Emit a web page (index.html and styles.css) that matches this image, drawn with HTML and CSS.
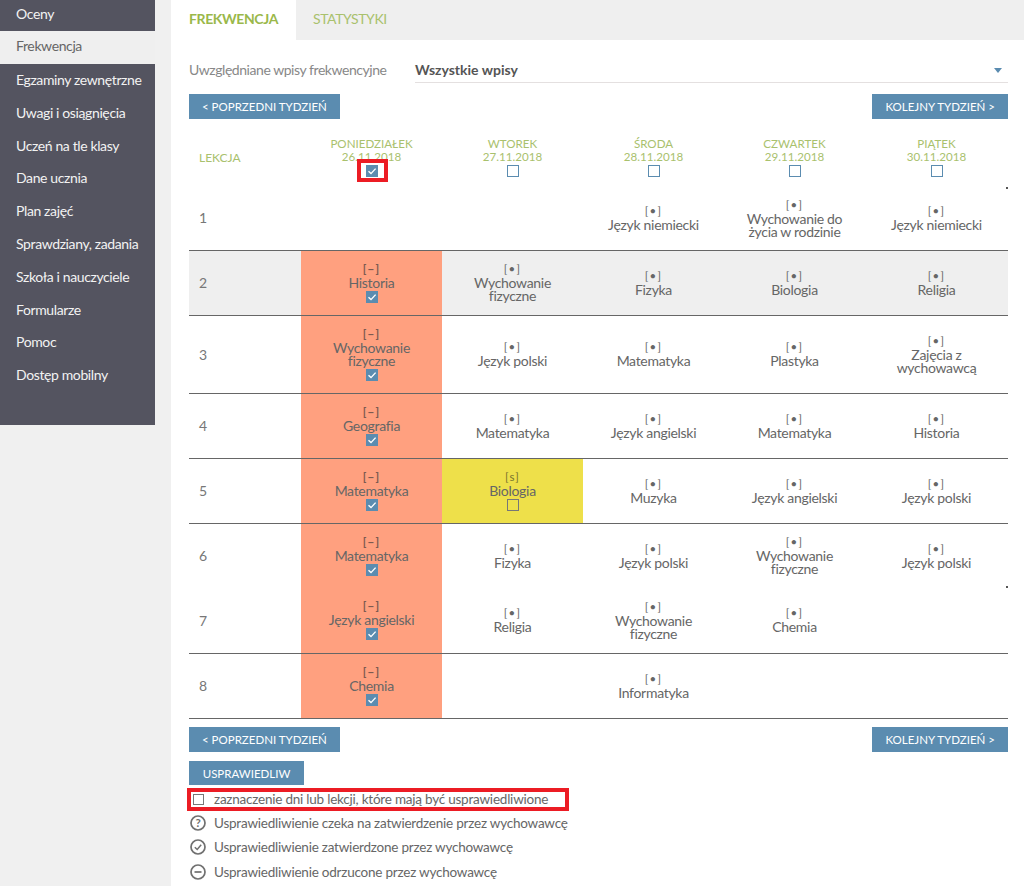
FILE: index.html
```html
<!DOCTYPE html>
<html lang="pl">
<head>
<meta charset="utf-8">
<title>Frekwencja</title>
<link rel="stylesheet" href="styles.css">
</head>
<body>
<svg class="defs" width="0" height="0" aria-hidden="true"><symbol id="tick" viewBox="0 0 12 12"><path d="M2.5 6.3 5 8.6 9.6 3.6" fill="none" stroke="#fff" stroke-width="1.4"/></symbol></svg>
<div class="page">
  <nav class="side">
    <a class="item first">Oceny</a>
    <a class="item active">Frekwencja</a>
    <a class="item">Egzaminy zewnętrzne</a>
    <a class="item">Uwagi i osiągnięcia</a>
    <a class="item">Uczeń na tle klasy</a>
    <a class="item">Dane ucznia</a>
    <a class="item">Plan zajęć</a>
    <a class="item">Sprawdziany, zadania</a>
    <a class="item">Szkoła i nauczyciele</a>
    <a class="item">Formularze</a>
    <a class="item">Pomoc</a>
    <a class="item">Dostęp mobilny</a>
  </nav>
  <main class="main">
    <div class="tabs"><span class="tab on">FREKWENCJA</span><span class="tab">STATYSTYKI</span></div>
    <div class="content">
      <div class="filter">
        <span class="flabel">Uwzględniane wpisy frekwencyjne</span>
        <span class="select">Wszystkie wpisy<i class="caret"></i></span>
      </div>
      <div class="nav-row"><button class="btn">&lt; POPRZEDNI TYDZIEŃ</button><button class="btn">KOLEJNY TYDZIEŃ &gt;</button></div>
      <table class="grid">
        <colgroup><col class="c-lek"><col class="c-day"><col class="c-day"><col class="c-day"><col class="c-day"><col class="c-last"></colgroup>
        <thead>
          <tr>
            <th class="lek">LEKCJA</th>
            <th>PONIEDZIAŁEK<br>26.11.2018<span class="box checked marked"><svg><use href="#tick"/></svg></span></th>
            <th>WTOREK<br>27.11.2018<span class="box"></span></th>
            <th>ŚRODA<br>28.11.2018<span class="box"></span></th>
            <th>CZWARTEK<br>29.11.2018<span class="box"></span></th>
            <th>PIĄTEK<br>30.11.2018<span class="box"></span></th>
          </tr>
        </thead>
        <tbody>
          <tr class="line top">
            <td class="n">1</td><td></td><td></td>
            <td><b class="m">[•]</b>Język niemiecki</td>
            <td><b class="m">[•]</b>Wychowanie do życia w rodzinie</td>
            <td class="speck-top"><b class="m">[•]</b>Język niemiecki</td>
          </tr>
          <tr class="line grey">
            <td class="n">2</td>
            <td class="abs"><b class="m">[−]</b>Historia<span class="box checked"><svg><use href="#tick"/></svg></span></td>
            <td><b class="m">[•]</b>Wychowanie fizyczne</td>
            <td><b class="m">[•]</b>Fizyka</td>
            <td><b class="m">[•]</b>Biologia</td>
            <td><b class="m">[•]</b>Religia</td>
          </tr>
          <tr class="line">
            <td class="n">3</td>
            <td class="abs"><b class="m">[−]</b>Wychowanie fizyczne<span class="box checked"><svg><use href="#tick"/></svg></span></td>
            <td><b class="m">[•]</b>Język polski</td>
            <td><b class="m">[•]</b>Matematyka</td>
            <td><b class="m">[•]</b>Plastyka</td>
            <td><b class="m">[•]</b>Zajęcia z wychowawcą</td>
          </tr>
          <tr class="line">
            <td class="n">4</td>
            <td class="abs"><b class="m">[−]</b>Geografia<span class="box checked"><svg><use href="#tick"/></svg></span></td>
            <td><b class="m">[•]</b>Matematyka</td>
            <td><b class="m">[•]</b>Język angielski</td>
            <td><b class="m">[•]</b>Matematyka</td>
            <td><b class="m">[•]</b>Historia</td>
          </tr>
          <tr class="line">
            <td class="n">5</td>
            <td class="abs"><b class="m">[−]</b>Matematyka<span class="box checked"><svg><use href="#tick"/></svg></span></td>
            <td class="late"><b class="m">[s]</b>Biologia<span class="box"></span></td>
            <td><b class="m">[•]</b>Muzyka</td>
            <td><b class="m">[•]</b>Język angielski</td>
            <td><b class="m">[•]</b>Język polski</td>
          </tr>
          <tr>
            <td class="n">6</td>
            <td class="abs"><b class="m">[−]</b>Matematyka<span class="box checked"><svg><use href="#tick"/></svg></span></td>
            <td><b class="m">[•]</b>Fizyka</td>
            <td><b class="m">[•]</b>Język polski</td>
            <td><b class="m">[•]</b>Wychowanie fizyczne</td>
            <td class="speck-bottom"><b class="m">[•]</b>Język polski</td>
          </tr>
          <tr class="line">
            <td class="n">7</td>
            <td class="abs"><b class="m">[−]</b>Język angielski<span class="box checked"><svg><use href="#tick"/></svg></span></td>
            <td><b class="m">[•]</b>Religia</td>
            <td><b class="m">[•]</b>Wychowanie fizyczne</td>
            <td><b class="m">[•]</b>Chemia</td>
            <td></td>
          </tr>
          <tr class="line">
            <td class="n">8</td>
            <td class="abs"><b class="m">[−]</b>Chemia<span class="box checked"><svg><use href="#tick"/></svg></span></td>
            <td></td>
            <td><b class="m">[•]</b>Informatyka</td>
            <td></td><td></td>
          </tr>
        </tbody>
      </table>
      <div class="nav-row bottom"><button class="btn">&lt; POPRZEDNI TYDZIEŃ</button><button class="btn">KOLEJNY TYDZIEŃ &gt;</button></div>
      <button class="btn solo">USPRAWIEDLIW</button>
      <ul class="legend">
        <li class="mark"><span class="box legend-box"></span>zaznaczenie dni lub lekcji, które mają być usprawiedliwione</li>
        <li><svg class="ic" viewBox="0 0 16 16"><circle cx="8" cy="8" r="7" fill="none" stroke="#707070" stroke-width="1.7"/><text x="8" y="11.8" text-anchor="middle" class="q">?</text></svg>Usprawiedliwienie czeka na zatwierdzenie przez wychowawcę</li>
        <li><svg class="ic" viewBox="0 0 16 16"><circle cx="8" cy="8" r="7" fill="none" stroke="#707070" stroke-width="1.7"/><path d="M4.8 8.2 7.2 10.5 11.2 5.8" fill="none" stroke="#707070" stroke-width="1.5"/></svg>Usprawiedliwienie zatwierdzone przez wychowawcę</li>
        <li><svg class="ic" viewBox="0 0 16 16"><circle cx="8" cy="8" r="7" fill="none" stroke="#707070" stroke-width="1.7"/><path d="M4.5 8H11.5" fill="none" stroke="#707070" stroke-width="1.7"/></svg>Usprawiedliwienie odrzucone przez wychowawcę</li>
      </ul>
    </div>
  </main>
</div>
</body>
</html>
```
FILE: styles.css
```css
* { box-sizing: border-box; }
html, body { margin: 0; height: 886px; overflow: hidden; }
body { background: #f0f0f0; font-family: Lato, "Liberation Sans", sans-serif; font-size: 14px; color: #555; }
.defs { position: absolute; }
.page { display: flex; gap: 16px; height: 886px; }

.side { width: 155px; height: 425px; flex: none; background: #545460; }
.item { display: block; height: 32.8px; line-height: 32px; padding-left: 16px; color: #f2f2f2; white-space: nowrap; letter-spacing: -.38px; }
.item.first { height: 30.5px; line-height: 28px; }
.item.active { background: #efefef; color: #666; height: 33.5px; line-height: 30px; }

.main { flex: 1; background: #fff; min-width: 0; }
.tabs { display: flex; height: 40px; background: #efefef; }
.tab { display: block; padding: 0 17px; line-height: 38px; font-size: 14px; letter-spacing: -.4px; color: #a9c16d; }
.tab.on { background: #fff; padding: 0 18px; font-weight: 700; color: #9ab84a; }
.content { padding: 0 16px 0 18px; }

.filter { display: flex; margin-top: 20px; height: 23px; align-items: flex-start; color: #888; }
.flabel { width: 226px; flex: none; line-height: 20px; letter-spacing: -.45px; }
.select { flex: 1; position: relative; height: 23px; line-height: 20px; border-bottom: 1px solid #e4e0e0; font-weight: 700; color: #555; }
.caret { position: absolute; right: 6px; top: 8px; border: 4px solid transparent; border-top: 5px solid #5a8bb0; border-bottom: 0; }

.nav-row { display: flex; justify-content: space-between; margin-top: 11px; }
.nav-row.bottom { margin-top: 8px; }
.btn { display: block; height: 25px; padding: 0 13px; border: 0; background: #5b8cb0; color: #fff; font: 11.5px/25px Lato, "Liberation Sans", sans-serif; white-space: nowrap; }
.solo { margin-top: 9px; height: 24px; width: 115px; }

.grid { width: 819px; table-layout: fixed; border-collapse: collapse; margin: 0; line-height: 13px; letter-spacing: -.3px; }
.c-lek { width: 112px; }
.c-day { width: 141px; }
.c-last { width: 143px; }
.grid th { height: 66px; padding: 18px 0 0; font-size: 11.6px; font-weight: 400; line-height: 13px; letter-spacing: 0; color: #a9c16d; text-align: center; vertical-align: top; }
.grid th.lek { padding: 32px 0 0 10px; font-size: 12px; text-align: left; }
.grid td { height: 65px; padding: 10px 20px 12px; text-align: center; vertical-align: middle; color: #666; }
.grid .top td { padding: 11px 20px; }
.grid td.n { padding: 0 0 0 10px; text-align: left; font-size: 14px; color: #777; }
.line td { border-bottom: 1px solid #666; }
.grey td { background: #efefef; }
.grid td.abs { background: #ffa07f; }
.grid td.late { background: #eee04a; }
.m { display: block; font-weight: 400; font-size: 11.5px; line-height: 15px; letter-spacing: 1.2px; color: #666; }
.abs .m { font-weight: 700; color: #7b5a50; }
.late .m { color: #77722e; }

.box { display: block; width: 12px; height: 12px; margin: 2px auto 0; border: 1px solid #5b8cb0; background: #fff; }
.late .box { background: transparent; border-color: #777; }
.box svg { display: block; width: 12px; height: 12px; margin: -1px; }
.box.checked { background: #5b8cb0; }
.marked { position: relative; }
.marked::after { content: ""; position: absolute; left: -10px; right: -11px; top: -7px; bottom: -6px; border: 4px solid #ec1c24; }

.speck-top, .speck-bottom { position: relative; }
.speck-top::after, .speck-bottom::after { content: ""; position: absolute; right: 0; width: 2px; height: 2px; background: #555; }
.speck-top::after { top: 2px; }
.speck-bottom::after { bottom: 0; }

.legend { list-style: none; margin: 0; padding: 0; color: #666; font-size: 13.5px; letter-spacing: -.22px; }
.legend li { display: flex; align-items: center; gap: 8px; height: 24.5px; padding-left: 1px; white-space: nowrap; }
.legend li.mark { width: 382px; height: 23px; margin: 3px 0 0 -2px; padding-left: 2px; border: 4px solid #ec1c24; gap: 10px; }
.legend-box { margin: 0; border-color: #777; width: 11px; height: 11px; background: #fff; flex: none; }
.ic { width: 16px; height: 16px; flex: none; }
.q { font-size: 11.5px; font-weight: 700; fill: #707070; font-family: Lato, sans-serif; }
```
